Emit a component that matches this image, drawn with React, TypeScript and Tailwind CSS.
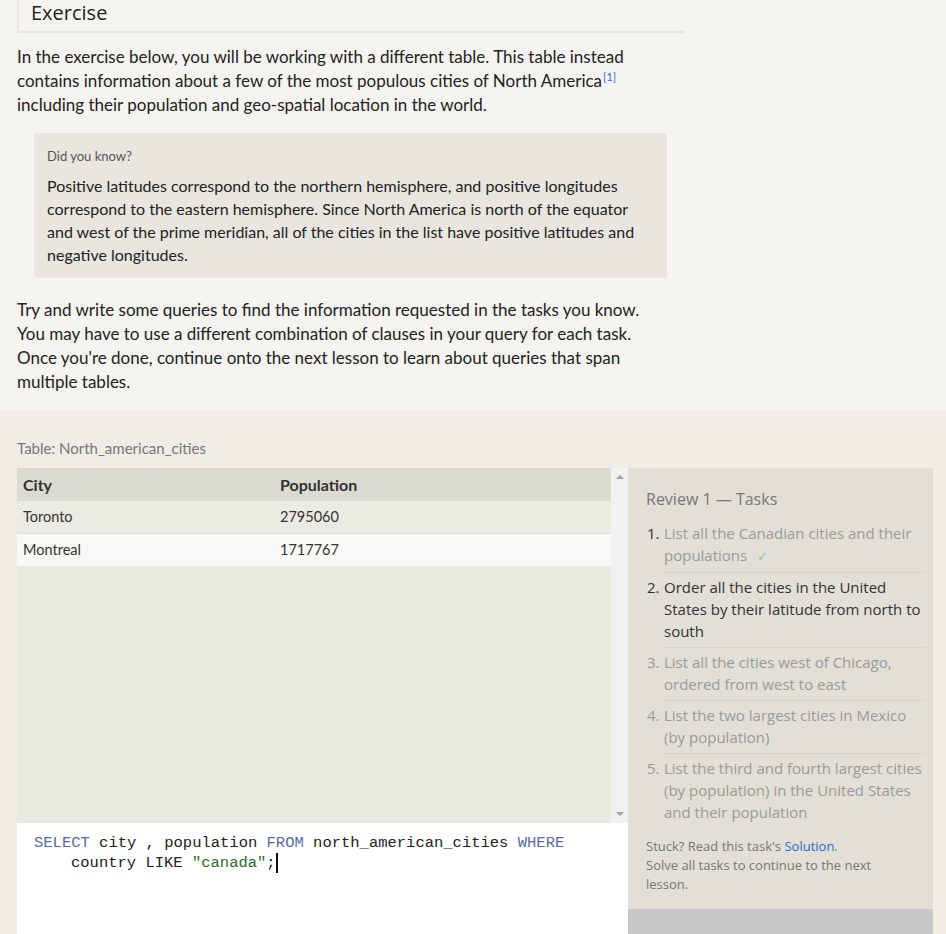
import React from "react";

const tasks = [
  { n: "1.", text: "List all the Canadian cities and their populations", done: true },
  { n: "2.", text: "Order all the cities in the United States by their latitude from north to south", active: true },
  { n: "3.", text: "List all the cities west of Chicago, ordered from west to east" },
  { n: "4.", text: "List the two largest cities in Mexico (by population)" },
  { n: "5.", text: "List the third and fourth largest cities (by population) in the United States and their population" },
];

const rows = [
  { city: "Toronto", population: "2795060" },
  { city: "Montreal", population: "1717767" },
];

export default function App() {
  return (
    <div className="w-[946px] h-[934px] overflow-hidden bg-[#efede6] font-['Lato',sans-serif]">
      {/* Lesson text */}
      <div className="bg-[#f5f4f0] px-[17px] pb-[16px]">
        <div className="w-[668px] border-l-2 border-b-2 border-[#e6e4dd] bg-[#f5f4f0] pl-[12px] pb-[5px]">
          <h2 className="text-[20px] leading-[26px] text-[#222] font-['Open_Sans',sans-serif]">Exercise</h2>
        </div>
        <p className="mt-[12px] w-[645px] text-[17px] leading-[24px] text-[#222]">
          In the exercise below, you will be working with a different table. This table instead contains information
          about a few of the most populous cities of North America
          <sup className="relative -top-[6px] ml-[1px] text-[11px] leading-none text-[#3366cc]">[1]</sup> including
          their population and geo-spatial location in the world.
        </p>
        <div className="ml-[17px] mt-[16px] w-[633px] rounded-[3px] bg-[#e8e6df] px-[13px] pt-[13px] pb-[12px]">
          <div className="text-[13px] leading-[20px] text-[#555]">Did you know?</div>
          <p className="mt-[8px] text-[16px] leading-[23px] text-[#222]">
            Positive latitudes correspond to the northern hemisphere, and positive longitudes correspond to the eastern
            hemisphere. Since North America is north of the equator and west of the prime meridian, all of the cities in
            the list have positive latitudes and negative longitudes.
          </p>
        </div>
        <p className="mt-[20px] w-[645px] text-[17px] leading-[24px] text-[#222]">
          Try and write some queries to find the information requested in the tasks you know. You may have to use a
          different combination of clauses in your query for each task. Once you're done, continue onto the next lesson
          to learn about queries that span multiple tables.
        </p>
      </div>

      {/* Exercise widget */}
      <div className="pt-[28px] pl-[17px]">
        <div className="text-[15px] leading-[20px] text-[#777]">Table: North_american_cities</div>
        <div className="mt-[10px] flex">
          <div className="w-[611px] flex flex-col">
            <div className="h-[355px] flex bg-[#e9e8e1]">
              <div className="flex-1">
                <div className="flex h-[33px] items-center bg-[#dcdbd1] text-[16px] font-bold text-[#333]">
                  <div className="w-[263px] pl-[6px]">City</div>
                  <div>Population</div>
                </div>
                {rows.map((r, i) => (
                  <div
                    key={r.city}
                    className={
                      i % 2 === 0
                        ? "flex h-[33px] items-center bg-[#ebeae3] text-[14.5px] text-[#333] border-b border-[#e0dfd8]"
                        : "flex h-[32px] items-center bg-[#f8f8f6] text-[14.5px] text-[#333]"
                    }
                  >
                    <div className="w-[263px] pl-[6px]">{r.city}</div>
                    <div>{r.population}</div>
                  </div>
                ))}
              </div>
              <div className="w-[17px] bg-[#f1f1f1] flex flex-col items-center justify-between py-[7px]">
                <div className="w-0 h-0 border-x-[4px] border-x-transparent border-b-[4px] border-b-[#a3a3a3]" />
                <div className="w-0 h-0 border-x-[4px] border-x-transparent border-t-[4px] border-t-[#a3a3a3]" />
              </div>
            </div>
            <div className="h-[120px] bg-white pl-[17px] pt-[10px] font-['Liberation_Mono',monospace] text-[15.5px] leading-[20px] text-[#222]">
              <div>
                <span className="text-[#5a6a9a]">SELECT</span> city , population{" "}
                <span className="text-[#5a6a9a]">FROM</span> north_american_cities{" "}
                <span className="text-[#5a6a9a]">WHERE</span>
              </div>
              <div className="pl-[37px]">
                country LIKE <span className="text-[#2e6b2e]">"canada"</span>;
                <span className="inline-block w-[2px] h-[20px] bg-[#111] align-top" />
              </div>
            </div>
          </div>
          <div className="w-[305px] flex flex-col">
            <div className="bg-[#e1dfd6] pl-[18px] pr-[8px] pt-[20px] pb-[15px] font-['Open_Sans',sans-serif]">
              <div className="text-[16px] leading-[22px] text-[#777]">Review 1 — Tasks</div>
              <ol className="mt-[12px]">
                {tasks.map((t, i) => (
                  <li key={t.n} className="flex text-[15px] leading-[22px]">
                    <span
                      className={
                        t.done || t.active
                          ? "w-[18px] shrink-0 pl-[1px] text-[#333]"
                          : "w-[18px] shrink-0 pl-[1px] text-[#999]"
                      }
                    >
                      {t.n}
                    </span>
                    <span
                      className={
                        (i < tasks.length - 1 ? "border-b border-[#d6d4cb] " : "") +
                        "flex-1 pb-[5px] mb-[3px] " +
                        (t.active ? "text-[#333]" : "text-[#9a9a9a]")
                      }
                    >
                      {t.text}
                      {t.done && <span className="ml-[10px] text-[13px] text-[#8fc58f]">✓</span>}
                    </span>
                  </li>
                ))}
              </ol>
              <div className="mt-[6px] w-[240px] text-[13px] leading-[19px] text-[#777]">
                Stuck? Read this task's <span className="text-[#3366cc]">Solution</span>.
                <br />
                Solve all tasks to continue to the next lesson.
              </div>
            </div>
            <div className="h-[40px] bg-[#c8c8c8]" />
          </div>
        </div>
      </div>
    </div>
  );
}
